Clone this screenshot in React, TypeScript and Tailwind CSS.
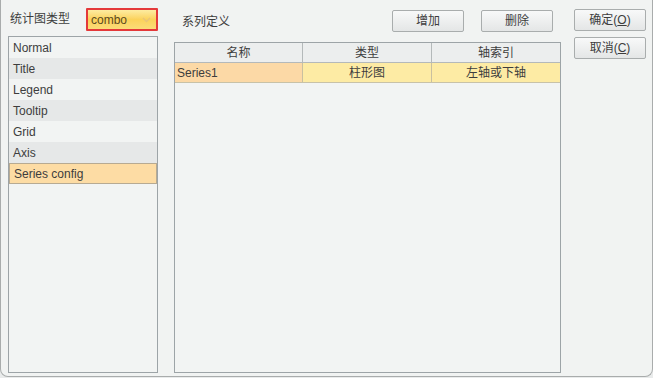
const items = ["Normal", "Title", "Legend", "Tooltip", "Grid", "Axis", "Series config"];

const font = "font-['Liberation_Sans','Noto_Sans_CJK_SC',sans-serif]";

function Btn({ label, className = "" }: { label: React.ReactNode; className?: string }) {
  return (
    <button
      className={`flex h-[22px] w-[72px] items-center justify-center rounded-[2px] border border-[#a9adad] bg-gradient-to-b from-[#f8f9f9] to-[#e4e6e6] text-[12px] text-[#3d3d3d] ${className}`}
    >
      {label}
    </button>
  );
}

export default function App() {
  return (
    <div className={`h-[378px] w-[653px] bg-[#e9ebeb] text-[#3d3d3d] ${font}`}>
      <div className="flex h-[377px] w-[653px] rounded-b-[8px] border-x border-b border-[#a9acac] bg-[#f1f3f2]">
        {/* left column */}
        <div className="ml-[7px] flex w-[150px] flex-col">
          <div className="flex h-[36px] items-start">
            <span className="mt-[10px] ml-[2px] text-[12px]">统计图类型</span>
            <div className="mt-[8px] ml-auto flex h-[23px] w-[72px] items-center rounded-[1px] border-2 border-[#e4393a] bg-gradient-to-b from-[#fdeca0] via-[#fbd25a] to-[#fbdc78] pl-[3px] pr-[4px]">
              <span className="text-[12px] text-[#5b4a1e]">combo</span>
              <svg className="ml-auto mr-[1px]" width="9" height="6" viewBox="0 0 9 6">
                <path d="M1 1 L4.5 4.5 L8 1" fill="none" stroke="#e8c47a" strokeWidth="1.3" />
              </svg>
            </div>
          </div>
          <div className="h-[337px] border border-[#9da4a7] bg-[#f2f4f3]">
            {items.map((it, i) => {
              const sel = it === "Series config";
              return (
                <div
                  key={it}
                  className={`flex h-[21px] items-center pl-[4px] text-[12px] ${
                    sel
                      ? "border border-[#b7aa92] bg-[#fddca4] pl-[3px]"
                      : i % 2 === 1
                      ? "bg-[#e6e8e8]"
                      : "bg-[#f2f4f3]"
                  }`}
                >
                  {it}
                </div>
              );
            })}
          </div>
        </div>

        {/* middle column */}
        <div className="ml-[16px] flex w-[387px] flex-col">
          <div className="flex h-[42px] items-start">
            <span className="mt-[13px] ml-[8px] text-[12px]">系列定义</span>
            <div className="ml-auto mt-[10px] mr-[8px] flex gap-[17px]">
              <Btn label="增加" />
              <Btn label="删除" />
            </div>
          </div>
          <div className="h-[331px] border border-[#9da4a7] bg-[#f2f4f3]">
            <div className="flex h-[20px] border-b border-[#b4b9ba] bg-[#eceeee] text-[12px]">
              <div className="flex w-[128px] items-center justify-center border-r border-[#b4b9ba]">名称</div>
              <div className="flex w-[129px] items-center justify-center border-r border-[#b4b9ba]">类型</div>
              <div className="flex flex-1 items-center justify-center">轴索引</div>
            </div>
            <div className="flex h-[20px] border-b border-[#c8c2a8] text-[12px]">
              <div className="flex w-[128px] items-center border-r border-[#c9c0a0] bg-[#fcd9a6] pl-[2px]">Series1</div>
              <div className="flex w-[129px] items-center justify-center border-r border-[#c9c0a0] bg-[#fdeba4]">柱形图</div>
              <div className="flex flex-1 items-center justify-center bg-[#fdeba4]">左轴或下轴</div>
            </div>
          </div>
        </div>

        {/* right column */}
        <div className="ml-[13px] flex flex-col gap-[6px] pt-[9px]">
          <Btn label={<>确定(<span className="underline">O</span>)</>} />
          <Btn label={<>取消(<span className="underline">C</span>)</>} />
        </div>
      </div>
    </div>
  );
}
